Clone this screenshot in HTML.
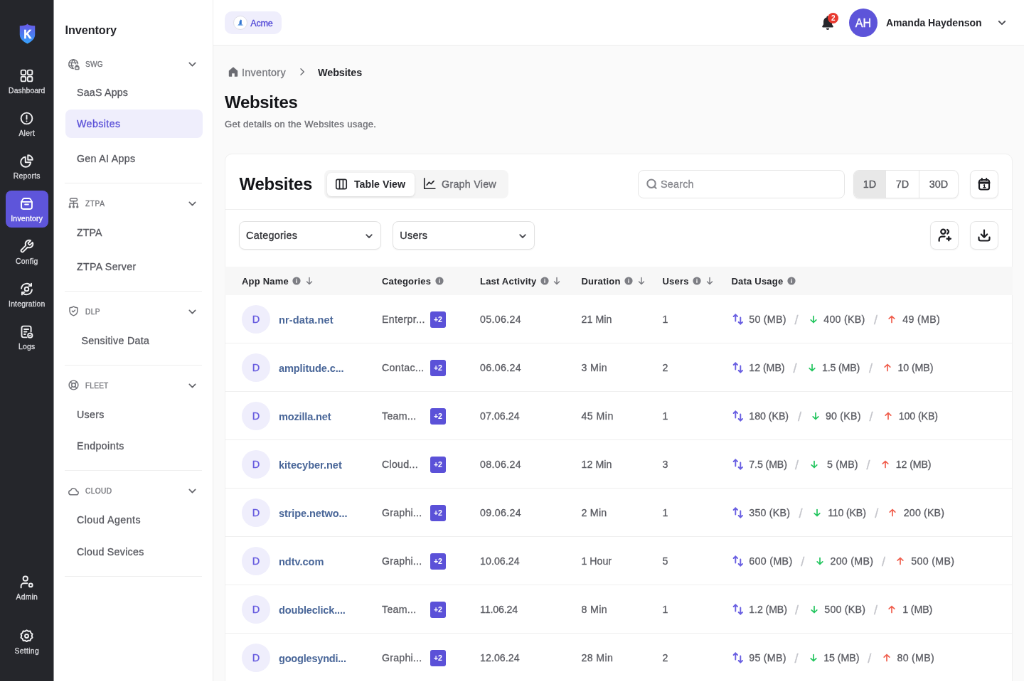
<!DOCTYPE html>
<html lang="en">
<head>
<meta charset="utf-8">
<title>Inventory - Websites</title>
<style>
*{box-sizing:border-box;margin:0;padding:0}
html,body{width:1024px;height:681px;overflow:hidden;background:#fafafa}
body{font-family:"Liberation Sans",sans-serif;color:#111}
#app{position:absolute;left:0;top:0;width:1440px;height:958px;transform:scale(0.711111);transform-origin:0 0;overflow:hidden;background:#fafafa;will-change:transform;-webkit-text-stroke:.3px}
b,h1,h2,.nm,.pl,#uname,#ctitle,#tab1 span,#badge,.bcb{-webkit-text-stroke:0}
.abs{position:absolute}
svg{display:block;overflow:visible}
/* rail */
#rail{position:absolute;left:0;top:0;width:75.500px;height:958px;background:#25262b}
.ri{position:absolute;left:8px;width:59.500px;height:52px;border-radius:8px;color:#f0f0f2}
.ri.on{background:#5e55da;color:#fff}
.ri.on span{color:#fff}
.ri svg{position:absolute;left:19.250px;top:7.500px;width:21px;height:21px}
.ri span{position:absolute;left:-8px;width:75.500px;top:32.500px;text-align:center;font-size:10.400px;line-height:14px;color:#dcdce0;white-space:nowrap}
/* side */
#side{position:absolute;left:76px;top:0;width:224px;height:958px;background:#fff;border-right:1px solid #ececec;box-shadow:-.5px 0 0 #fff}
#side h2{position:absolute;left:15.500px;top:31px;font-size:16.300px;line-height:22px;font-weight:700;color:#25262b;letter-spacing:-0.1px}
.sh{position:absolute;left:44px;font-size:10.200px;line-height:14px;color:#74757b;text-transform:uppercase}
.shi{position:absolute;left:19px;width:17px;height:17px;color:#717278}
.chv{position:absolute;left:187.500px;width:13px;height:13px;color:#66676d}
.si{position:absolute;left:32px;font-size:14.200px;line-height:20px;color:#55565d;white-space:nowrap}
.si.on{color:#5b51d8}
.sdiv{position:absolute;left:15px;width:193px;height:1px;background:#ededed}
#sact{position:absolute;left:15.500px;top:154px;width:193px;height:40px;border-radius:8px;background:#efeefc}
/* header */
#hdr{position:absolute;left:300px;top:0;width:1140px;height:64px;background:#fff;border-bottom:1px solid #ececec}
#chip{position:absolute;left:16px;top:15.600px;width:80px;height:32.500px;border-radius:10px;background:#efeefc}
#chip .cav{position:absolute;left:11.700px;top:6px;width:20px;height:20px;border-radius:50%;background:#fff;border:1px solid #dddde6;display:flex;align-items:center;justify-content:center}
#chip span{position:absolute;left:36.200px;top:9px;font-size:12.600px;line-height:16px;color:#4f46d6}
#badge{position:absolute;left:864.300px;top:17.500px;width:15px;height:15px;border-radius:50%;background:#e8392f;color:#fff;font-size:10px;line-height:15px;text-align:center;font-weight:700}
#ava{position:absolute;left:893.500px;top:12px;width:40px;height:40px;border-radius:50%;background:#5d54d9;color:#fff;font-size:16.200px;line-height:41.500px;text-indent:1px;text-align:center}
#uname{position:absolute;left:946px;top:21.800px;font-size:14px;line-height:20px;font-weight:700;color:#25262b;white-space:nowrap}
/* main */
#main{position:absolute;left:0;top:0;width:1440px;height:958px;pointer-events:none}
.bc{font-size:14.400px;line-height:20px;white-space:nowrap;letter-spacing:.3px}
#ttl{position:absolute;left:316px;top:128px;font-size:24px;line-height:32px;font-weight:700;color:#141519;letter-spacing:-.3px}
#sub{position:absolute;left:316px;top:165.800px;font-size:13px;line-height:18px;color:#6a6b71;white-space:nowrap}
#card{position:absolute;left:316px;top:215.500px;width:1108px;height:800px;background:#fff;border:1px solid #efefef;border-radius:10px}
#ci{position:absolute;left:-1px;top:-1px;width:1108px;height:800px}
#ctitle{position:absolute;left:20.500px;top:27px;font-size:24px;line-height:32px;font-weight:700;color:#141519;letter-spacing:-.3px}
#tabs{position:absolute;left:140px;top:23.500px;width:258.500px;height:40px;border-radius:8px;background:#f5f5f5}
#tab1{position:absolute;left:3.500px;top:3.500px;width:123.500px;height:33px;border-radius:6px;background:#fff;box-shadow:0 1px 3px rgba(0,0,0,.12)}
#tab1 svg{position:absolute;left:10px;top:6.500px;width:20px;height:20px}
#tab1 span{position:absolute;left:38.500px;top:6.500px;font-size:14.200px;line-height:20px;font-weight:700;color:#25262b;white-space:nowrap}
#tab2{position:absolute;left:131px;top:4px;width:124px;height:32px}
#tab2 svg{position:absolute;left:7px;top:5px;width:20px;height:20px}
#tab2 span{position:absolute;left:34px;top:6px;font-size:14.400px;letter-spacing:.2px;line-height:20px;color:#66676d;white-space:nowrap}
#search{position:absolute;left:581px;top:23.500px;width:291px;height:40px;border:1px solid #e6e6e6;border-radius:8px;background:#fff}
#search svg{position:absolute;left:10px;top:10px}
#search span{position:absolute;left:31px;top:9px;font-size:14.400px;line-height:20px;color:#85868c;letter-spacing:.2px}
#seg{position:absolute;left:884px;top:23.500px;width:148px;height:40px;border:1px solid #e6e6e6;border-radius:8px;background:#fff;overflow:hidden;display:flex;box-shadow:0 1px 2px rgba(0,0,0,.06)}
#seg div{height:100%;border-right:1px solid #e6e6e6;font-size:14.400px;line-height:38px;text-align:center;color:#55565c}
#seg div.on{background:#e8e8e8}
.ibtn{position:absolute;width:40px;height:40px;border:1px solid #e6e6e6;border-radius:8px;background:#fff;display:flex;align-items:center;justify-content:center;box-shadow:0 1px 2px rgba(0,0,0,.05)}
.hline{position:absolute;left:0;width:100%;height:1px;background:#eee}
.sel{position:absolute;top:95.500px;width:200px;height:40px;border:1px solid #e2e2e2;border-radius:8px;background:#fff;box-shadow:0 1px 2px rgba(0,0,0,.05)}
.sel span{position:absolute;left:9px;top:9.100px;font-size:14.400px;line-height:20px;color:#303136;letter-spacing:.25px}
.sel svg{position:absolute;right:9px;top:13px}

#thead{position:absolute;left:0;top:159.500px;width:100%;height:40px;background:#f7f7f7}
.th{position:absolute;top:0;height:40px;display:flex;align-items:center;white-space:nowrap}
.th b{font-size:13px;font-weight:700;color:#25262b;letter-spacing:.2px}
.th .inf{margin-left:5.500px}
.th .srt{margin-left:5.500px}
.row{position:absolute;left:0;width:100%;height:68px;border-bottom:1px solid #efefef}
.row .av{position:absolute;left:24px;top:14px;width:40px;height:40px;border-radius:50%;background:#efeefc;color:#675cdf;font-size:14.500px;font-weight:400;-webkit-text-stroke:.35px #675cdf;line-height:40.500px;text-align:center}
.row .nm{position:absolute;left:76px;top:24.700px;font-size:14.600px;line-height:20px;font-weight:700;color:#4a6799;white-space:nowrap}
.row .c{position:absolute;top:24.100px;font-size:14.200px;line-height:20px;color:#5a5b62;white-space:nowrap}
.row .cat{left:221px}
.row .pl{position:absolute;left:288.500px;top:23px;width:22.500px;height:23px;border-radius:3px;background:#5b51d8;color:#fff;font-size:10.500px;font-weight:700;line-height:23px;text-align:center;letter-spacing:-.2px}
.row .ud{position:absolute;left:712.500px;top:25px}
.row .d{position:absolute;top:24.100px;font-size:14.200px;line-height:20px;color:#5a5b62;white-space:nowrap}
.row i{position:absolute;top:25px;font-style:normal;color:#c4c5cb;font-size:18px;line-height:20px}
.row .ar{position:absolute;top:27px}
</style>
</head>
<body>
<div id="app">

<!-- ============ RAIL ============ -->
<div id="rail">
  <svg class="abs" style="left:26.500px;top:33px" width="23" height="29" viewBox="0 0 24 29" preserveAspectRatio="none">
    <defs><linearGradient id="lg" x1="0" y1="0" x2="0" y2="1"><stop offset="0" stop-color="#6a58e6"/><stop offset=".55" stop-color="#4a7cf0"/><stop offset="1" stop-color="#36a6ff"/></linearGradient></defs>
    <path d="M12 0.400C10.500 2.300 7 3.300 0.800 3.200V15.500C0.800 21.500 5.500 25.300 12 28.600 18.500 25.300 23.200 21.500 23.200 15.500V3.200C17 3.300 13.500 2.300 12 0.400Z" fill="url(#lg)"/>
    <text x="12.300" y="20.600" text-anchor="middle" font-family="Liberation Sans, sans-serif" font-weight="700" font-size="16" fill="#fff" stroke="#fff" stroke-width=".5">K</text>
  </svg>

  <div class="ri" style="top:88px">
    <svg viewBox="0 0 24 24" fill="none" stroke="currentColor" stroke-width="2.2"><rect x="3" y="3" width="7.5" height="7.5" rx="2.2"/><rect x="13.5" y="3" width="7.5" height="7.5" rx="2.2"/><rect x="3" y="13.5" width="7.5" height="7.5" rx="2.2"/><rect x="13.5" y="13.5" width="7.5" height="7.5" rx="2.2"/></svg>
    <span style="letter-spacing:0.06px">Dashboard</span>
  </div>
  <div class="ri" style="top:148px">
    <svg viewBox="0 0 24 24" fill="none" stroke="currentColor" stroke-width="2.2" stroke-linecap="round"><circle cx="12" cy="12" r="9"/><path d="M12 7.5v5.5"/><path d="M12 16.4v.2"/></svg>
    <span style="letter-spacing:0.24px">Alert</span>
  </div>
  <div class="ri" style="top:208px">
    <svg viewBox="0 0 24 24" fill="none" stroke="currentColor" stroke-width="2.2" stroke-linecap="round" stroke-linejoin="round"><path d="M10 5.5A8 8 0 1 0 18.5 14H10z"/><path d="M14 2.5V10h7.5A7.5 7.5 0 0 0 14 2.5z"/></svg>
    <span style="letter-spacing:0.24px">Reports</span>
  </div>
  <div class="ri on" style="top:268.400px">
    <svg viewBox="0 0 24 24" fill="none" stroke="currentColor" stroke-width="2.2" stroke-linecap="round" stroke-linejoin="round"><path d="M3.500 9v8.500a3 3 0 0 0 3 3h11a3 3 0 0 0 3-3V9"/><path d="M3.500 9l2.200-4a3 3 0 0 1 2.600-1.500h7.400a3 3 0 0 1 2.600 1.500l2.200 4z"/><path d="M9.300 13.200h5.400"/></svg>
    <span style="letter-spacing:0.26px">Inventory</span>
  </div>
  <div class="ri" style="top:328px">
    <svg viewBox="0 0 24 24" fill="none" stroke="currentColor" stroke-width="2.2" stroke-linecap="round" stroke-linejoin="round"><path d="M14.7 6.3a1 1 0 0 0 0 1.4l1.6 1.6a1 1 0 0 0 1.4 0l3.77-3.77a6 6 0 0 1-7.94 7.94l-6.91 6.91a2.12 2.12 0 0 1-3-3l6.91-6.91a6 6 0 0 1 7.94-7.94l-3.76 3.76z"/></svg>
    <span style="letter-spacing:0.28px">Config</span>
  </div>
  <div class="ri" style="top:388px">
    <svg viewBox="0 0 24 24" fill="none" stroke="currentColor" stroke-width="2.2" stroke-linecap="round" stroke-linejoin="round"><path d="M3.5 11a8.6 8.6 0 0 1 15.5-4.3"/><path d="M19.5 3v4h-4"/><path d="M20.5 13a8.6 8.6 0 0 1-15.5 4.3"/><path d="M4.5 21v-4h4"/><circle cx="12" cy="12" r="3.2"/></svg>
    <span style="letter-spacing:0.21px">Integration</span>
  </div>
  <div class="ri" style="top:448px">
    <svg viewBox="0 0 24 24" fill="none" stroke="currentColor" stroke-width="2.2" stroke-linecap="round" stroke-linejoin="round"><path d="M12 21H7a3 3 0 0 1-3-3V6a3 3 0 0 1 3-3h9a3 3 0 0 1 3 3v6"/><path d="M8 8h7"/><path d="M8 12h4"/><path d="M8 16h2"/><circle cx="17.5" cy="18" r="3.6"/><path d="M16.2 18l1 1 1.6-1.8" stroke-width="1.4"/></svg>
    <span style="letter-spacing:0.19px">Logs</span>
  </div>
  <div class="ri" style="top:800px">
    <svg viewBox="0 0 24 24" fill="none" stroke="currentColor" stroke-width="2.2" stroke-linecap="round" stroke-linejoin="round"><circle cx="10" cy="6.5" r="3.6"/><path d="M3 21v-2.500a4.5 4.500 0 0 1 4.500-4.500h5.500"/><circle cx="18.500" cy="17" r="2.800"/></svg>
    <span style="letter-spacing:0.18px">Admin</span>
  </div>
  <div class="ri" style="top:876px">
    <svg viewBox="0 0 24 24" fill="none" stroke="currentColor" stroke-width="2.2" stroke-linecap="round" stroke-linejoin="round"><path d="M12 2.500l2.600 1.700 3.100-.2 1 2.900 2.500 1.800-1 2.900 1 2.900-2.500 1.800-1 2.900-3.100-.2-2.600 1.700-2.600-1.700-3.100.2-1-2.900-2.500-1.800 1-2.900-1-2.900 2.500-1.800 1-2.900 3.100.2z"/><circle cx="12" cy="12" r="2.800"/></svg>
    <span style="letter-spacing:0.31px">Setting</span>
  </div>
</div>

<!-- ============ SIDE ============ -->
<div id="side">
  <h2>Inventory</h2>
  <div id="sact"></div>

  <svg class="shi" style="top:81.8px" viewBox="0 0 24 24" fill="none" stroke="currentColor" stroke-width="2.100" stroke-linecap="round" stroke-linejoin="round"><path d="M20.500 10.500A9 9 0 1 0 11 20.500"/><path d="M2.800 9h17.400M2.800 15h8.700"/><path d="M11.500 2.500c-5 5-5 13 0 18M11.500 2.500c2.700 2.700 4 6 4 8.500"/><rect x="15" y="16.500" width="7.500" height="5.500" rx="1.200"/><path d="M16.800 16.500v-1.200a2 2 0 0 1 4 0v1.200"/></svg>
  <div class="sh" style="letter-spacing:0.12px;top:84.4px">SWG</div>
  <svg class="chv" style="top:84.0px" viewBox="0 0 14 14" fill="none" stroke="currentColor" stroke-width="1.900" stroke-linecap="round" stroke-linejoin="round"><path d="M2.500 4.800l4.500 4.500 4.500-4.500"/></svg>
  <div class="si" style="letter-spacing:0.22px;top:119.5px">SaaS Apps</div>
  <div class="si on" style="letter-spacing:0.44px;top:164.0px">Websites</div>
  <div class="si" style="letter-spacing:0.32px;top:212.5px">Gen AI Apps</div>
  <div class="sdiv" style="top:257px"></div>

  <svg class="shi" style="top:276.8px" viewBox="0 0 24 24" fill="none" stroke="currentColor" stroke-width="2.100" stroke-linecap="round" stroke-linejoin="round"><rect x="5" y="2.800" width="14" height="5.400" rx="2.200"/><path d="M12 8.200v4.600M4.500 17.300v-4.500h15v4.500M12 12.800v4.500"/><circle cx="4.500" cy="19.600" r="1.300"/><circle cx="12" cy="19.600" r="1.300"/><circle cx="19.500" cy="19.600" r="1.300"/></svg>
  <div class="sh" style="letter-spacing:0.56px;top:280.4px">ZTPA</div>
  <svg class="chv" style="top:280.0px" viewBox="0 0 14 14" fill="none" stroke="currentColor" stroke-width="1.900" stroke-linecap="round" stroke-linejoin="round"><path d="M2.500 4.800l4.500 4.500 4.500-4.500"/></svg>
  <div class="si" style="letter-spacing:0.10px;top:316.5px">ZTPA</div>
  <div class="si" style="letter-spacing:0.30px;top:364.5px">ZTPA Server</div>
  <div class="sdiv" style="top:409px"></div>

  <svg class="shi" style="top:428.8px" viewBox="0 0 24 24" fill="none" stroke="currentColor" stroke-width="2.100" stroke-linecap="round" stroke-linejoin="round"><path d="M12 3c2.300 1.400 4.700 2.100 7.200 2.300.3 0 .6.300.6.700v5.200c0 4.600-2.900 7.900-7.800 9.800-4.900-1.900-7.800-5.200-7.800-9.800V6c0-.4.300-.7.600-.7C7.300 5.100 9.700 4.400 12 3z"/><path d="M9.200 11.800l2 2 3.600-3.700"/></svg>
  <div class="sh" style="letter-spacing:0.34px;top:432.4px">DLP</div>
  <svg class="chv" style="top:432.0px" viewBox="0 0 14 14" fill="none" stroke="currentColor" stroke-width="1.900" stroke-linecap="round" stroke-linejoin="round"><path d="M2.500 4.800l4.500 4.500 4.500-4.500"/></svg>
  <div class="si" style="letter-spacing:0.30px;top:468.5px;left:38.400px">Sensitive Data</div>
  <div class="sdiv" style="top:513px"></div>

  <svg class="shi" style="top:532.8px" viewBox="0 0 24 24" fill="none" stroke="currentColor" stroke-width="2.100" stroke-linecap="round" stroke-linejoin="round"><circle cx="12" cy="12" r="9"/><circle cx="12" cy="12" r="3.900"/><path d="M5.900 5.900l3.300 3.300M14.800 14.800l3.300 3.300M18.100 5.900l-3.300 3.300M9.200 14.800l-3.300 3.300"/></svg>
  <div class="sh" style="letter-spacing:0.15px;top:536.4px">FLEET</div>
  <svg class="chv" style="top:536.0px" viewBox="0 0 14 14" fill="none" stroke="currentColor" stroke-width="1.900" stroke-linecap="round" stroke-linejoin="round"><path d="M2.500 4.800l4.500 4.500 4.500-4.500"/></svg>
  <div class="si" style="letter-spacing:0.34px;top:572.5px">Users</div>
  <div class="si" style="letter-spacing:0.42px;top:616.5px">Endpoints</div>
  <div class="sdiv" style="top:661px"></div>

  <svg class="shi" style="top:681.8px" viewBox="0 0 24 24" fill="none" stroke="currentColor" stroke-width="2.100" stroke-linecap="round" stroke-linejoin="round"><path d="M7 19.500a4.500 4.500 0 0 1-.6-8.960 6 6 0 0 1 11.500 1.560A3.700 3.700 0 0 1 17.500 19.500z"/></svg>
  <div class="sh" style="letter-spacing:0.34px;top:684.4px">CLOUD</div>
  <svg class="chv" style="top:684.0px" viewBox="0 0 14 14" fill="none" stroke="currentColor" stroke-width="1.900" stroke-linecap="round" stroke-linejoin="round"><path d="M2.500 4.800l4.500 4.500 4.500-4.500"/></svg>
  <div class="si" style="letter-spacing:0.47px;top:720.5px">Cloud Agents</div>
  <div class="si" style="letter-spacing:0.30px;top:765.5px">Cloud Sevices</div>
  <div class="sdiv" style="top:810px"></div>
</div>

<!-- ============ HEADER ============ -->
<div id="hdr">
  <div id="chip">
    <div class="cav"><svg viewBox="0 0 14 14" width="14" height="14"><path d="M5.600 9.600V5.200l1-.6V3.300l1.200-.9 1 .8v6.400z" fill="#2f74d0"/><path d="M4.300 9.800l1.300-2.400v2.400z" fill="#3b8ae0"/><path d="M2 11.200c3.200-2 6.800-2 10 0-3.200-1.100-6.800-1.100-10 0z" fill="#3b8ae0"/><path d="M4 9.500h6.200v.7H4z" fill="#2f74d0"/></svg></div>
    <span style="letter-spacing:-0.19px">Acme</span>
  </div>
  <svg class="abs" style="left:854px;top:20.500px" width="20" height="22" viewBox="0 0 20 22"><path d="M10 1.500c-.9 0-1.600.7-1.600 1.500v.5C5.600 4.200 4 6.600 4 9.500v3.800L2.300 16c-.4.700.1 1.500.9 1.500h13.600c.8 0 1.300-.8.900-1.500L16 13.300V9.500c0-2.900-1.600-5.300-4.400-6V3c0-.8-.7-1.500-1.600-1.500z" fill="#25262b"/><path d="M7.800 18.800h4.400a2.200 2.200 0 0 1-4.400 0z" fill="#25262b"/></svg>
  <div id="badge">2</div>
  <div id="ava">AH</div>
  <div id="uname">Amanda Haydenson</div>
  <svg class="abs" style="left:1102px;top:25px" width="14" height="14" viewBox="0 0 14 14" fill="none" stroke="#4c4d53" stroke-width="1.800" stroke-linecap="round" stroke-linejoin="round"><path d="M2.800 5l4.200 4.200 4.200-4.200"/></svg>
</div>


<!-- ============ MAIN ============ -->
<div id="main">
  <!-- breadcrumb -->
  <svg class="abs" style="left:320px;top:93px" width="16" height="16" viewBox="0 0 16 16"><path d="M8 1.300L1.800 6.500V14a.7.700 0 0 0 .7.700h3.700v-4.500h3.600v4.500h3.700a.7.700 0 0 0 .7-.7V6.500z" fill="#6b6c72"/></svg>
  <div class="abs bc" style="left:340px;top:91.700px;color:#77787e">Inventory</div>
  <svg class="abs" style="left:418px;top:94px" width="14" height="14" viewBox="0 0 14 14" fill="none" stroke="#6b6c72" stroke-width="1.400" stroke-linecap="round" stroke-linejoin="round"><path d="M5 2.800l4.300 4.200L5 11.200"/></svg>
  <div class="abs bc bcb" style="left:447px;top:92px;color:#25262b;font-weight:700;letter-spacing:-.1px">Websites</div>
  <h1 id="ttl">Websites</h1>
  <div id="sub" style="letter-spacing:0.35px">Get details on the Websites usage.</div>

  <div id="card"><div id="ci">
    <div id="ctitle">Websites</div>
    <div id="tabs">
      <div id="tab1">
        <svg width="18" height="18" viewBox="0 0 18 18" fill="none" stroke="#25262b" stroke-width="1.500" stroke-linejoin="round"><rect x="2.500" y="3" width="13" height="12" rx="2"/><path d="M6.800 3v12M11.200 3v12"/></svg>
        <span>Table View</span>
      </div>
      <div id="tab2">
        <svg width="18" height="18" viewBox="0 0 18 18" fill="none" stroke="#25262b" stroke-width="1.500" stroke-linecap="round" stroke-linejoin="round"><path d="M2.500 2.500v13h13.500"/><path d="M5.500 11l3-3.500 2.500 2 3.500-3.500"/></svg>
        <span>Graph View</span>
      </div>
    </div>
    <div id="search">
      <svg width="18" height="18" viewBox="0 0 18 18" fill="none" stroke="#85868c" stroke-width="2" stroke-linecap="round"><circle cx="8" cy="8.200" r="5.700"/><path d="M12.300 12.500l2.300 2.300"/></svg>
      <span>Search</span>
    </div>
    <div id="seg"><div class="on" style="width:45px">1D</div><div style="width:47px">7D</div><div style="width:54px;border-right:0">30D</div></div>
    <div class="ibtn" style="left:1047.500px;top:23.500px">
      <svg width="20" height="20" viewBox="0 0 20 20" fill="none" stroke="#1c1d22" stroke-width="2.200" stroke-linejoin="round" stroke-linecap="round"><rect x="3" y="4" width="14" height="13.500" rx="2.500"/><path d="M3 8h14" stroke-width="3"/><path d="M6.800 2.200v2.500M13.200 2.200v2.500"/><path d="M9.200 11.300l1.200-.5v4M9 14.800h2.800" stroke-width="1.400"/></svg>
    </div>
    <div class="hline" style="top:78.500px"></div>

    <div class="sel" style="left:20px"><span>Categories</span><svg width="14" height="14" viewBox="0 0 14 14" fill="none" stroke="#4c4d53" stroke-width="1.800" stroke-linecap="round" stroke-linejoin="round"><path d="M3.200 5.200l3.800 3.800 3.800-3.800"/></svg></div>
    <div class="sel" style="left:236.300px"><span>Users</span><svg width="14" height="14" viewBox="0 0 14 14" fill="none" stroke="#4c4d53" stroke-width="1.800" stroke-linecap="round" stroke-linejoin="round"><path d="M3.200 5.200l3.800 3.800 3.800-3.800"/></svg></div>
    <div class="ibtn" style="left:992px;top:95.300px">
      <svg width="23" height="23" viewBox="0 0 22 22" fill="none" stroke="#1c1d22" stroke-width="2.200" stroke-linecap="round" stroke-linejoin="round"><circle cx="9" cy="6.500" r="3"/><path d="M3.500 19v-2.200a3.800 3.800 0 0 1 3.800-3.800H11"/><path d="M14.500 3.800a3 3 0 0 1 0 5.400"/><path d="M16.500 13.500v5M14 16h5"/></svg>
    </div>
    <div class="ibtn" style="left:1047.500px;top:95.300px">
      <svg width="22" height="22" viewBox="0 0 22 22" fill="none" stroke="#1c1d22" stroke-width="2.200" stroke-linecap="round" stroke-linejoin="round"><path d="M11 3.500v10M6.800 9.500l4.200 4.200 4.200-4.200"/><path d="M3.500 13.500v2.500a2.500 2.500 0 0 0 2.500 2.500h10a2.500 2.500 0 0 0 2.500-2.500v-2.500"/></svg>
    </div>
    <div id="thead">
      <div class="th" style="left:24px"><b>App Name</b><svg class="inf" width="12" height="12" viewBox="0 0 12 12"><circle cx="6" cy="6" r="5.600" fill="#7d7e84"/><rect x="5.300" y="5.200" width="1.400" height="3.600" fill="#fff"/><rect x="5.300" y="2.900" width="1.400" height="1.500" fill="#fff"/></svg><svg class="srt" width="12" height="12" viewBox="0 0 12 12" fill="none" stroke="#77787e" stroke-width="1.400" stroke-linecap="round" stroke-linejoin="round"><path d="M6 1.500v9M2.500 7l3.500 3.500L9.500 7"/></svg></div>
      <div class="th" style="left:221px"><b>Categories</b><svg class="inf" width="12" height="12" viewBox="0 0 12 12"><circle cx="6" cy="6" r="5.600" fill="#7d7e84"/><rect x="5.300" y="5.200" width="1.400" height="3.600" fill="#fff"/><rect x="5.300" y="2.900" width="1.400" height="1.500" fill="#fff"/></svg></div>
      <div class="th" style="left:359px"><b>Last Activity</b><svg class="inf" width="12" height="12" viewBox="0 0 12 12"><circle cx="6" cy="6" r="5.600" fill="#7d7e84"/><rect x="5.300" y="5.200" width="1.400" height="3.600" fill="#fff"/><rect x="5.300" y="2.900" width="1.400" height="1.500" fill="#fff"/></svg><svg class="srt" width="12" height="12" viewBox="0 0 12 12" fill="none" stroke="#77787e" stroke-width="1.400" stroke-linecap="round" stroke-linejoin="round"><path d="M6 1.500v9M2.500 7l3.500 3.500L9.500 7"/></svg></div>
      <div class="th" style="left:501.5px"><b>Duration</b><svg class="inf" width="12" height="12" viewBox="0 0 12 12"><circle cx="6" cy="6" r="5.600" fill="#7d7e84"/><rect x="5.300" y="5.200" width="1.400" height="3.600" fill="#fff"/><rect x="5.300" y="2.900" width="1.400" height="1.500" fill="#fff"/></svg><svg class="srt" width="12" height="12" viewBox="0 0 12 12" fill="none" stroke="#77787e" stroke-width="1.400" stroke-linecap="round" stroke-linejoin="round"><path d="M6 1.500v9M2.500 7l3.500 3.500L9.500 7"/></svg></div>
      <div class="th" style="left:615.5px"><b>Users</b><svg class="inf" width="12" height="12" viewBox="0 0 12 12"><circle cx="6" cy="6" r="5.600" fill="#7d7e84"/><rect x="5.300" y="5.200" width="1.400" height="3.600" fill="#fff"/><rect x="5.300" y="2.900" width="1.400" height="1.500" fill="#fff"/></svg><svg class="srt" width="12" height="12" viewBox="0 0 12 12" fill="none" stroke="#77787e" stroke-width="1.400" stroke-linecap="round" stroke-linejoin="round"><path d="M6 1.500v9M2.500 7l3.500 3.500L9.500 7"/></svg></div>
      <div class="th" style="left:712.5px"><b>Data Usage</b><svg class="inf" width="12" height="12" viewBox="0 0 12 12"><circle cx="6" cy="6" r="5.600" fill="#7d7e84"/><rect x="5.300" y="5.200" width="1.400" height="3.600" fill="#fff"/><rect x="5.300" y="2.900" width="1.400" height="1.500" fill="#fff"/></svg></div>
    </div>
    <div class="row" style="top:199.7px">
      <div class="av">D</div><a class="nm" style="letter-spacing:0.11px">nr-data.net</a><span class="c cat" style="letter-spacing:0.31px">Enterpr...</span><span class="pl">+2</span><span class="c" style="left:359px;letter-spacing:0.34px">05.06.24</span><span class="c" style="left:501.500px;letter-spacing:0.08px">21 Min</span><span class="c" style="left:615.500px">1</span>
      <svg class="ud" width="18" height="18" viewBox="0 0 18 18" fill="none" stroke="#6a60e2" stroke-width="1.900" stroke-linecap="round" stroke-linejoin="round"><path d="M5.300 11.500V2.300M2.600 5L5.300 2.300 8 5"/><path d="M12.300 6.500v9.200M9.600 13l2.700 2.700L15 13"/></svg><span class="d" style="left:737.3px;letter-spacing:0.28px">50 (MB)</span><i style="left:801.6px">/</i><svg class="ar" style="left:820.9px" width="14" height="14" viewBox="0 0 14 14" fill="none" stroke="#22c55e" stroke-width="1.700" stroke-linecap="round" stroke-linejoin="round"><path d="M7 2.500v9M3.200 7.800L7 11.500l3.800-3.700"/></svg><span class="d" style="left:842.2px;letter-spacing:0.31px">400 (KB)</span><i style="left:913.1px">/</i><svg class="ar" style="left:931.3px" width="14" height="14" viewBox="0 0 14 14" fill="none" stroke="#f0604f" stroke-width="1.700" stroke-linecap="round" stroke-linejoin="round"><path d="M7 11.500v-9M3.200 6.200L7 2.500l3.800 3.700"/></svg><span class="d" style="left:953.2px;letter-spacing:0.36px">49 (MB)</span>
    </div>
    <div class="row" style="top:267.7px">
      <div class="av">D</div><a class="nm" style="letter-spacing:-0.13px">amplitude.c...</a><span class="c cat" style="letter-spacing:0.31px">Contac...</span><span class="pl">+2</span><span class="c" style="left:359px;letter-spacing:0.34px">06.06.24</span><span class="c" style="left:501.500px;letter-spacing:0.36px">3 Min</span><span class="c" style="left:615.500px">2</span>
      <svg class="ud" width="18" height="18" viewBox="0 0 18 18" fill="none" stroke="#6a60e2" stroke-width="1.900" stroke-linecap="round" stroke-linejoin="round"><path d="M5.300 11.500V2.300M2.600 5L5.300 2.300 8 5"/><path d="M12.300 6.500v9.200M9.600 13l2.700 2.700L15 13"/></svg><span class="d" style="left:737.3px;letter-spacing:-0.03px">12 (MB)</span><i style="left:799.4px">/</i><svg class="ar" style="left:818.7px" width="14" height="14" viewBox="0 0 14 14" fill="none" stroke="#22c55e" stroke-width="1.700" stroke-linecap="round" stroke-linejoin="round"><path d="M7 2.500v9M3.200 7.800L7 11.500l3.800-3.700"/></svg><span class="d" style="left:840.0px;letter-spacing:-0.18px">1.5 (MB)</span><i style="left:905.9px">/</i><svg class="ar" style="left:924.7px" width="14" height="14" viewBox="0 0 14 14" fill="none" stroke="#f0604f" stroke-width="1.700" stroke-linecap="round" stroke-linejoin="round"><path d="M7 11.500v-9M3.200 6.200L7 2.500l3.800 3.700"/></svg><span class="d" style="left:946.6px;letter-spacing:-0.11px">10 (MB)</span>
    </div>
    <div class="row" style="top:335.7px">
      <div class="av">D</div><a class="nm" style="letter-spacing:-0.19px">mozilla.net</a><span class="c cat" style="letter-spacing:0.29px">Team...</span><span class="pl">+2</span><span class="c" style="left:359px;letter-spacing:0.06px">07.06.24</span><span class="c" style="left:501.500px;letter-spacing:0.45px">45 Min</span><span class="c" style="left:615.500px">1</span>
      <svg class="ud" width="18" height="18" viewBox="0 0 18 18" fill="none" stroke="#6a60e2" stroke-width="1.900" stroke-linecap="round" stroke-linejoin="round"><path d="M5.300 11.500V2.300M2.600 5L5.300 2.300 8 5"/><path d="M12.300 6.500v9.200M9.600 13l2.700 2.700L15 13"/></svg><span class="d" style="left:737.3px;letter-spacing:-0.03px">180 (KB)</span><i style="left:805.9px">/</i><svg class="ar" style="left:823.7px" width="14" height="14" viewBox="0 0 14 14" fill="none" stroke="#22c55e" stroke-width="1.700" stroke-linecap="round" stroke-linejoin="round"><path d="M7 2.500v9M3.200 7.800L7 11.500l3.800-3.700"/></svg><span class="d" style="left:844.9px;letter-spacing:0.23px">90 (KB)</span><i style="left:906.5px">/</i><svg class="ar" style="left:925.8px" width="14" height="14" viewBox="0 0 14 14" fill="none" stroke="#f0604f" stroke-width="1.700" stroke-linecap="round" stroke-linejoin="round"><path d="M7 11.500v-9M3.200 6.200L7 2.500l3.800 3.700"/></svg><span class="d" style="left:947.7px;letter-spacing:-0.10px">100 (KB)</span>
    </div>
    <div class="row" style="top:403.7px">
      <div class="av">D</div><a class="nm" style="letter-spacing:-0.04px">kitecyber.net</a><span class="c cat" style="letter-spacing:0.24px">Cloud...</span><span class="pl">+2</span><span class="c" style="left:359px;letter-spacing:0.34px">08.06.24</span><span class="c" style="left:501.500px;letter-spacing:0.08px">12 Min</span><span class="c" style="left:615.500px">3</span>
      <svg class="ud" width="18" height="18" viewBox="0 0 18 18" fill="none" stroke="#6a60e2" stroke-width="1.900" stroke-linecap="round" stroke-linejoin="round"><path d="M5.300 11.500V2.300M2.600 5L5.300 2.300 8 5"/><path d="M12.300 6.500v9.200M9.600 13l2.700 2.700L15 13"/></svg><span class="d" style="left:737.3px;letter-spacing:-0.11px">7.5 (MB)</span><i style="left:802.1px">/</i><svg class="ar" style="left:822.0px" width="14" height="14" viewBox="0 0 14 14" fill="none" stroke="#22c55e" stroke-width="1.700" stroke-linecap="round" stroke-linejoin="round"><path d="M7 2.500v9M3.200 7.800L7 11.500l3.800-3.700"/></svg><span class="d" style="left:847.1px;letter-spacing:0.18px">5 (MB)</span><i style="left:902.6px">/</i><svg class="ar" style="left:922.0px" width="14" height="14" viewBox="0 0 14 14" fill="none" stroke="#f0604f" stroke-width="1.700" stroke-linecap="round" stroke-linejoin="round"><path d="M7 11.500v-9M3.200 6.200L7 2.500l3.800 3.700"/></svg><span class="d" style="left:943.8px;letter-spacing:-0.11px">12 (MB)</span>
    </div>
    <div class="row" style="top:471.7px">
      <div class="av">D</div><a class="nm" style="letter-spacing:-0.12px">stripe.netwo...</a><span class="c cat" style="letter-spacing:0.21px">Graphi...</span><span class="pl">+2</span><span class="c" style="left:359px;letter-spacing:0.34px">09.06.24</span><span class="c" style="left:501.500px;letter-spacing:0.25px">2 Min</span><span class="c" style="left:615.500px">1</span>
      <svg class="ud" width="18" height="18" viewBox="0 0 18 18" fill="none" stroke="#6a60e2" stroke-width="1.900" stroke-linecap="round" stroke-linejoin="round"><path d="M5.300 11.500V2.300M2.600 5L5.300 2.300 8 5"/><path d="M12.300 6.500v9.200M9.600 13l2.700 2.700L15 13"/></svg><span class="d" style="left:737.3px;letter-spacing:0.24px">350 (KB)</span><i style="left:807.6px">/</i><svg class="ar" style="left:826.4px" width="14" height="14" viewBox="0 0 14 14" fill="none" stroke="#22c55e" stroke-width="1.700" stroke-linecap="round" stroke-linejoin="round"><path d="M7 2.500v9M3.200 7.800L7 11.500l3.800-3.700"/></svg><span class="d" style="left:848.2px;letter-spacing:-0.18px">110 (KB)</span><i style="left:914.2px">/</i><svg class="ar" style="left:932.4px" width="14" height="14" viewBox="0 0 14 14" fill="none" stroke="#f0604f" stroke-width="1.700" stroke-linecap="round" stroke-linejoin="round"><path d="M7 11.500v-9M3.200 6.200L7 2.500l3.800 3.700"/></svg><span class="d" style="left:954.8px;letter-spacing:0.17px">200 (KB)</span>
    </div>
    <div class="row" style="top:539.7px">
      <div class="av">D</div><a class="nm" style="letter-spacing:-0.05px">ndtv.com</a><span class="c cat" style="letter-spacing:0.21px">Graphi...</span><span class="pl">+2</span><span class="c" style="left:359px;letter-spacing:0.06px">10.06.24</span><span class="c" style="left:501.500px;letter-spacing:-0.01px">1 Hour</span><span class="c" style="left:615.500px">5</span>
      <svg class="ud" width="18" height="18" viewBox="0 0 18 18" fill="none" stroke="#6a60e2" stroke-width="1.900" stroke-linecap="round" stroke-linejoin="round"><path d="M5.300 11.500V2.300M2.600 5L5.300 2.300 8 5"/><path d="M12.300 6.500v9.200M9.600 13l2.700 2.700L15 13"/></svg><span class="d" style="left:737.3px;letter-spacing:0.36px">600 (MB)</span><i style="left:810.3px">/</i><svg class="ar" style="left:829.7px" width="14" height="14" viewBox="0 0 14 14" fill="none" stroke="#22c55e" stroke-width="1.700" stroke-linecap="round" stroke-linejoin="round"><path d="M7 2.500v9M3.200 7.800L7 11.500l3.800-3.700"/></svg><span class="d" style="left:851.5px;letter-spacing:0.29px">200 (MB)</span><i style="left:924.0px">/</i><svg class="ar" style="left:943.4px" width="14" height="14" viewBox="0 0 14 14" fill="none" stroke="#f0604f" stroke-width="1.700" stroke-linecap="round" stroke-linejoin="round"><path d="M7 11.500v-9M3.200 6.200L7 2.500l3.800 3.700"/></svg><span class="d" style="left:965.2px;letter-spacing:0.36px">500 (MB)</span>
    </div>
    <div class="row" style="top:607.7px">
      <div class="av">D</div><a class="nm" style="letter-spacing:-0.19px">doubleclick....</a><span class="c cat" style="letter-spacing:0.29px">Team...</span><span class="pl">+2</span><span class="c" style="left:359px;letter-spacing:-0.15px">11.06.24</span><span class="c" style="left:501.500px;letter-spacing:0.36px">8 Min</span><span class="c" style="left:615.500px">1</span>
      <svg class="ud" width="18" height="18" viewBox="0 0 18 18" fill="none" stroke="#6a60e2" stroke-width="1.900" stroke-linecap="round" stroke-linejoin="round"><path d="M5.300 11.500V2.300M2.600 5L5.300 2.300 8 5"/><path d="M12.300 6.500v9.200M9.600 13l2.700 2.700L15 13"/></svg><span class="d" style="left:737.3px;letter-spacing:-0.11px">1.2 (MB)</span><i style="left:802.1px">/</i><svg class="ar" style="left:821.5px" width="14" height="14" viewBox="0 0 14 14" fill="none" stroke="#22c55e" stroke-width="1.700" stroke-linecap="round" stroke-linejoin="round"><path d="M7 2.500v9M3.200 7.800L7 11.500l3.800-3.700"/></svg><span class="d" style="left:843.3px;letter-spacing:0.24px">500 (KB)</span><i style="left:913.1px">/</i><svg class="ar" style="left:931.3px" width="14" height="14" viewBox="0 0 14 14" fill="none" stroke="#f0604f" stroke-width="1.700" stroke-linecap="round" stroke-linejoin="round"><path d="M7 11.500v-9M3.200 6.200L7 2.500l3.800 3.700"/></svg><span class="d" style="left:953.2px;letter-spacing:-0.09px">1 (MB)</span>
    </div>
    <div class="row" style="top:675.7px">
      <div class="av">D</div><a class="nm" style="letter-spacing:-0.24px">googlesyndi...</a><span class="c cat" style="letter-spacing:0.21px">Graphi...</span><span class="pl">+2</span><span class="c" style="left:359px;letter-spacing:0.06px">12.06.24</span><span class="c" style="left:501.500px;letter-spacing:0.36px">28 Min</span><span class="c" style="left:615.500px">2</span>
      <svg class="ud" width="18" height="18" viewBox="0 0 18 18" fill="none" stroke="#6a60e2" stroke-width="1.900" stroke-linecap="round" stroke-linejoin="round"><path d="M5.300 11.500V2.300M2.600 5L5.300 2.300 8 5"/><path d="M12.300 6.500v9.200M9.600 13l2.700 2.700L15 13"/></svg><span class="d" style="left:737.3px;letter-spacing:0.28px">95 (MB)</span><i style="left:801.6px">/</i><svg class="ar" style="left:820.9px" width="14" height="14" viewBox="0 0 14 14" fill="none" stroke="#22c55e" stroke-width="1.700" stroke-linecap="round" stroke-linejoin="round"><path d="M7 2.500v9M3.200 7.800L7 11.500l3.800-3.700"/></svg><span class="d" style="left:842.2px;letter-spacing:-0.03px">15 (MB)</span><i style="left:904.3px">/</i><svg class="ar" style="left:923.6px" width="14" height="14" viewBox="0 0 14 14" fill="none" stroke="#f0604f" stroke-width="1.700" stroke-linecap="round" stroke-linejoin="round"><path d="M7 11.500v-9M3.200 6.200L7 2.500l3.800 3.700"/></svg><span class="d" style="left:945.5px;letter-spacing:0.28px">80 (MB)</span>
    </div>
  </div></div>
</div>

</div>
</body>
</html>
